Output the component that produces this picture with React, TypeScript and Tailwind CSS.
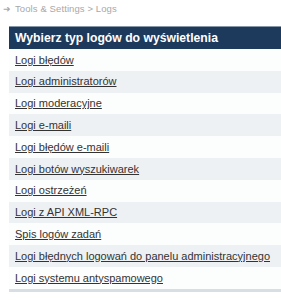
import React from "react";

const links = [
  "Logi błędów",
  "Logi administratorów",
  "Logi moderacyjne",
  "Logi e-maili",
  "Logi błędów e-maili",
  "Logi botów wyszukiwarek",
  "Logi ostrzeżeń",
  "Logi z API XML-RPC",
  "Spis logów zadań",
  "Logi błędnych logowań do panelu administracyjnego",
  "Logi systemu antyspamowego",
];

export default function App() {
  return (
    <div
      className="w-[281px] h-[300px] bg-white overflow-hidden"
      style={{ fontFamily: '"Liberation Sans", Arial, sans-serif' }}
    >
      <div className="h-[26px] pl-[3px] pt-[2px] flex items-start gap-[4px] text-[9.5px] text-[#a8a8a8]">
        <span className="text-[9px] leading-[14px]">➜</span>
        <span className="leading-[14px] tracking-[0.1px]">Tools &amp; Settings &gt; Logs</span>
      </div>
      <div className="pl-[9px]">
        <div className="h-[23px] bg-[#1d3a5c] border-t border-[#8596a8] flex items-center pl-[6px] text-white font-bold text-[12.2px]">
          Wybierz typ logów do wyświetlenia
        </div>
        {links.map((l, i) => (
          <div
            key={i}
            className={`h-[21.8px] flex items-center pl-[6px] text-[11px] ${
              i % 2 === 1 ? "bg-[#eef1f4]" : "bg-[#fcfdfd]"
            }`}
          >
            <a href="#" className="text-[#333] underline">
              {l}
            </a>
          </div>
        ))}
        <div className="h-[3px] bg-[#d9dee4]" />
      </div>
    </div>
  );
}
